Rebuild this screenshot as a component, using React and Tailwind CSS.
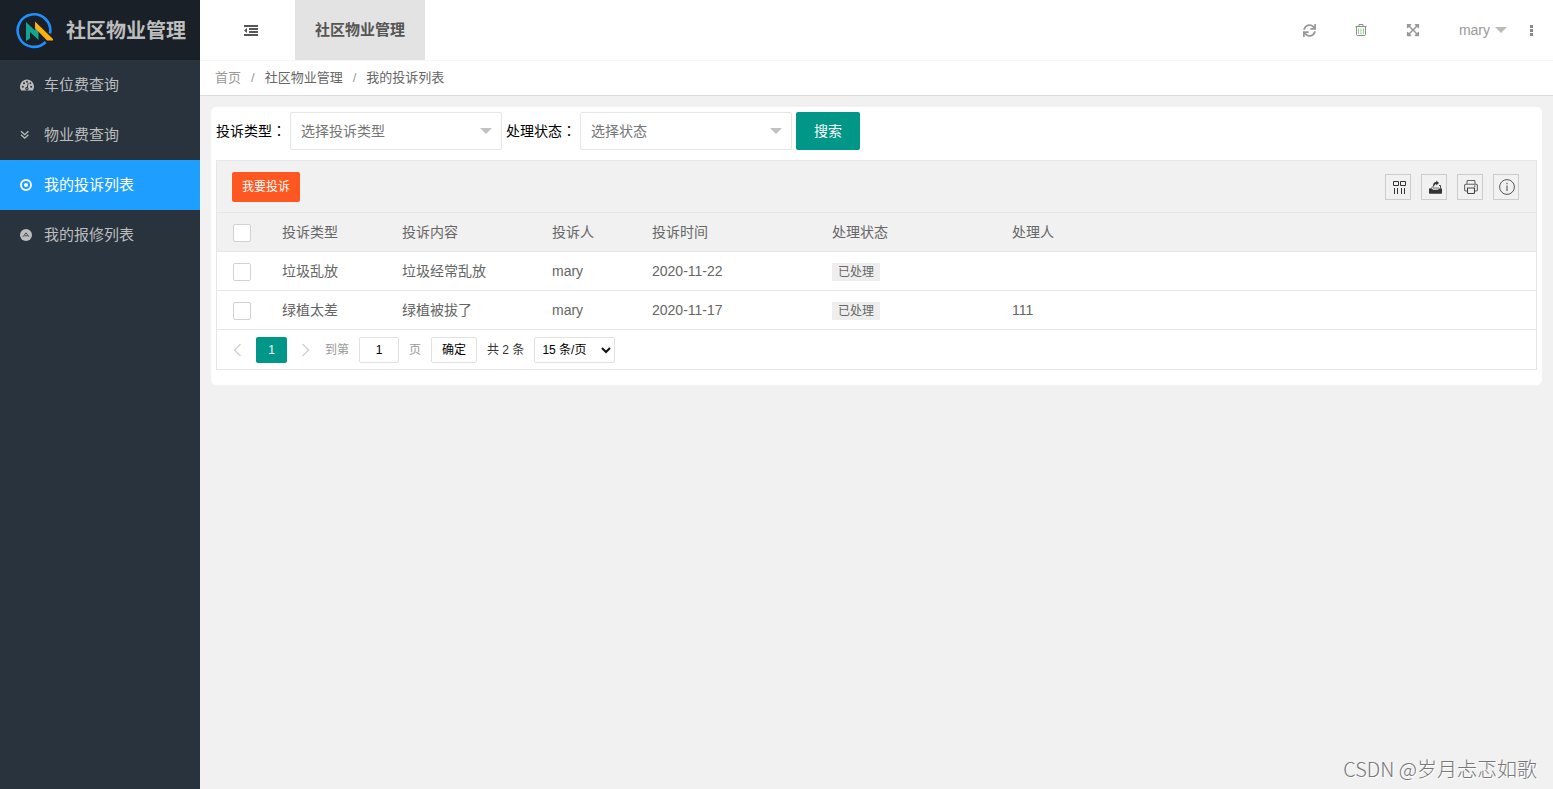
import { FaExpandArrowsAlt, FaSync } from 'react-icons/fa'

const MENU = [
  { label: '车位费查询', icon: GaugeIcon },
  { label: '物业费查询', icon: DoubleDownIcon },
  { label: '我的投诉列表', icon: DotCircleIcon, active: true },
  { label: '我的报修列表', icon: UpCircleIcon },
]

const ROWS = [
  { type: '垃圾乱放', content: '垃圾经常乱放', user: 'mary', date: '2020-11-22', status: '已处理', handler: '' },
  { type: '绿植太差', content: '绿植被拔了', user: 'mary', date: '2020-11-17', status: '已处理', handler: '111' },
]

const COLUMNS = [
  { title: '投诉类型', width: 'w-[120px]' },
  { title: '投诉内容', width: 'w-[150px]' },
  { title: '投诉人', width: 'w-[100px]' },
  { title: '投诉时间', width: 'w-[180px]' },
  { title: '处理状态', width: 'w-[180px]' },
  { title: '处理人', width: '' },
]

const TOOLS = [
  { label: '筛选列', icon: ColumnsIcon },
  { label: '导出', icon: ExportIcon },
  { label: '打印', icon: PrinterIcon },
  { label: '提示', icon: InfoIcon },
]

function Logo() {
  return (
    <svg viewBox="0 0 38 38" className="h-[38px] w-[38px]" fill="none" aria-hidden="true">
      <path d="M35 21.500A16.300 16.300 0 1 0 30.600 30" stroke="#1e90ff" strokeWidth="2.600" />
      <path d="M11 10l9 8.500V15l3.500 3.500V28L15 20v6.500L11 29z" fill="#16a394" />
      <path d="M20 9.500l17.500 17 1 2H32L20 16z" fill="#ffb010" />
    </svg>
  )
}

function GaugeIcon() {
  return (
    <svg viewBox="0 0 14 14" className="h-[14px] w-[14px]" aria-hidden="true">
      <path d="M1.200 12.500A7 7 0 1 1 12.800 12.500z" fill="currentColor" />
      <g fill="#28333e">
        <circle cx="2.800" cy="8.700" r="1" />
        <circle cx="4" cy="5.200" r="1" />
        <circle cx="7" cy="3.700" r="1" />
        <circle cx="11.200" cy="8.700" r="1" />
        <circle cx="10.400" cy="5.200" r="0.900" />
        <path d="M7.800 4.900l.8.300-.7 4.200a1.600 1.600 0 1 1-1-.3z" />
      </g>
      <circle cx="7" cy="10.700" r="0.600" fill="currentColor" />
    </svg>
  )
}

function DoubleDownIcon() {
  return (
    <svg viewBox="0 0 10 10" className="h-[10px] w-[10px]" fill="none" stroke="currentColor" strokeWidth="1.300" aria-hidden="true">
      <path d="M1 1.200l3.700 3.500 3.700-3.500M1 4.700l3.700 3.500 3.700-3.500" />
    </svg>
  )
}

function DotCircleIcon() {
  return (
    <svg viewBox="0 0 12 12" className="h-3 w-3" fill="none" aria-hidden="true">
      <circle cx="6" cy="6" r="5" stroke="currentColor" strokeWidth="1.900" />
      <circle cx="6" cy="6" r="2" fill="currentColor" />
    </svg>
  )
}

function UpCircleIcon() {
  return (
    <svg viewBox="0 0 12 12" className="h-3 w-3" fill="none" aria-hidden="true">
      <circle cx="6" cy="6" r="6" fill="currentColor" />
      <path d="M3 7.800l3-4 3 4M4.500 6.800h3" stroke="#28333e" strokeWidth="0.800" />
    </svg>
  )
}

function FoldIcon() {
  return (
    <svg viewBox="0 0 14 11" className="h-[11px] w-[14px]" fill="currentColor" aria-hidden="true">
      <path d="M0 0h14v2H0zM5 3h9v2H5zM5 6h9v2H5zM0 9h14v2H0zM0 5.500L3 3v5z" />
    </svg>
  )
}

function TrashIcon() {
  return (
    <svg viewBox="0 0 12 13" className="h-[13px] w-3" fill="none" aria-hidden="true">
      <path d="M.5 2.500h11M4 2.500v-2h4v2M1.500 3v7.500q0 1 1 1h7q1 0 1-1V3" stroke="#8c8c8c" />
      <path d="M3.500 4.500V10M6 4.500V10M8.500 4.500V10" stroke="#8fd08f" />
    </svg>
  )
}

function ColumnsIcon() {
  return (
    <svg viewBox="0 0 14 14" className="h-[14px] w-[14px]" fill="none" stroke="#333" aria-hidden="true">
      <path d="M1.500 1.500h5v4h-5zM8.500 1.500h5v4h-5zM2.500 8v6M5.500 8v6M9.500 8v6M12.500 8v6" />
    </svg>
  )
}

function ExportIcon() {
  return (
    <svg viewBox="0 0 14 14" className="h-[14px] w-[14px]" fill="#333" aria-hidden="true">
      <path d="M1 8.500h3l1 1.200h5l1-1.200h3v4.500q0 .8-.8.8H1.800q-.8 0-.8-.8z" />
      <path d="M5 6q0-3.700 3.300-3.900V.6l2.700 2.500-2.700 2.400V3.900Q6.300 4 6.300 6z" />
      <path d="M3 8.500L5.500 6M11 5.500h1.500v3" stroke="#333" strokeWidth="0.900" fill="none" />
      <path d="M5 7h6v2H5z" opacity=".35" />
    </svg>
  )
}

function PrinterIcon() {
  return (
    <svg viewBox="0 0 14 14" className="h-[14px] w-[14px]" fill="none" stroke="#666" strokeWidth="1.100" aria-hidden="true">
      <path d="M3 4V1.500q0-1 1-1h6q1 0 1 1V4M3 11H1.800Q.6 11 .6 9.800V5.400Q.6 4.200 1.800 4.200h10.400q1.200 0 1.200 1.200v4.400q0 1.200-1.200 1.200H11" />
      <path d="M3.500 8h7v4.500q0 1-1 1h-5q-1 0-1-1z" stroke="#444" />
      <path d="M10 6.100h1.500" />
    </svg>
  )
}

function InfoIcon() {
  return (
    <svg viewBox="0 0 16 16" className="h-4 w-4" fill="none" stroke="#555" aria-hidden="true">
      <circle cx="8" cy="8" r="7.400" />
      <path d="M8 6.500V12" stroke="#777" strokeWidth="1.400" />
      <path d="M8 3.800v1.500" stroke="#777" strokeWidth="1.400" />
    </svg>
  )
}

function Chevron({ d }) {
  return (
    <svg viewBox="0 0 8 14" className="h-[14px] w-2" fill="none" stroke="currentColor" strokeWidth="1.500" aria-hidden="true">
      <path d={d} />
    </svg>
  )
}

function FilterSelect({ id, label, placeholder }) {
  return (
    <>
      <label
        htmlFor={id}
        className="mr-1 font-['Liberation_Sans','Noto_Sans_CJK_TC',sans-serif] text-sm text-black"
      >
        {label}
      </label>
      <div className="relative mr-1 w-[212px]">
        <select
          id={id}
          className="block h-[38px] w-full appearance-none rounded-[2px] border border-[#e6e6e6] bg-white px-[10px] text-sm text-[#757575]"
        >
          <option>{placeholder}</option>
        </select>
        <span className="pointer-events-none absolute right-[10px] top-4 border-x-6 border-t-6 border-x-transparent border-t-[#c2c2c2]" />
      </div>
    </>
  )
}

function Checkbox({ label }) {
  return (
    <input
      type="checkbox"
      aria-label={label}
      className="block h-[18px] w-[18px] appearance-none rounded-[2px] border border-[#d2d2d2] bg-white"
    />
  )
}

function Sidebar() {
  return (
    <aside className="w-[200px] shrink-0 bg-[#28333e] text-[#bdbdbd]">
      <div className="flex h-[60px] items-center bg-[#192027] pl-[15px] pt-0.5">
        <Logo />
        <h1 className="ml-[13px] text-xl font-bold">社区物业管理</h1>
      </div>
      <nav>
        {MENU.map(({ label, icon: Icon, active }) => (
          <a
            key={label}
            href="#"
            className={`flex h-[50px] items-center pl-5 text-[15px] ${active ? 'bg-[#1e9fff] text-white' : ''}`}
          >
            <span className="w-6">
              <Icon />
            </span>
            {label}
          </a>
        ))}
      </nav>
    </aside>
  )
}

function Header() {
  return (
    <header className="flex h-[61px] items-start border-b border-[#f6f6f6] bg-white text-[#999]">
      <button type="button" aria-label="收起菜单" className="flex h-[60px] w-[95px] items-center pl-11 text-[#555]">
        <FoldIcon />
      </button>
      <a href="#" className="flex h-[60px] items-center bg-[#e3e3e3] px-5 text-[15px] font-bold text-[#555]">
        社区物业管理
      </a>
      <div className="ml-auto flex h-[60px] items-center pr-5">
        <button type="button" aria-label="刷新" className="mr-[39px]">
          <FaSync className="h-[13px] w-[13px]" />
        </button>
        <button type="button" aria-label="清理" className="mr-[39px]">
          <TrashIcon />
        </button>
        <button type="button" aria-label="全屏" className="mr-[39px]">
          <FaExpandArrowsAlt className="h-[14px] w-[14px]" />
        </button>
        <button type="button" className="mr-[23px] flex items-center gap-[5px] text-sm">
          mary
          <span className="border-x-6 border-t-6 border-x-transparent border-t-[#bbb]" />
        </button>
        <button type="button" aria-label="更多" className="flex flex-col gap-px">
          <span className="h-[3px] w-[3px] bg-[#888]" />
          <span className="h-[3px] w-[3px] bg-[#888]" />
          <span className="h-[3px] w-[3px] bg-[#888]" />
        </button>
      </div>
    </header>
  )
}

function Pagination() {
  return (
    <div className="flex h-[39px] items-center pl-4 text-xs text-[#333]">
      <button type="button" aria-label="上一页" className="mr-[15px] text-[#d2d2d2]">
        <Chevron d="M7.500 1L1.500 7l6 6" />
      </button>
      <button type="button" className="mr-[15px] h-[26px] w-[31px] rounded-[2px] bg-[#009688] text-white">
        1
      </button>
      <button type="button" aria-label="下一页" className="mr-[15px] text-[#d2d2d2]">
        <Chevron d="M.5 1l6 6-6 6" />
      </button>
      <label htmlFor="page" className="mr-[10px] text-[#999]">
        到第
      </label>
      <input
        id="page"
        defaultValue="1"
        className="mr-[10px] h-[26px] w-10 rounded-[2px] border border-[#e2e2e2] bg-white text-center text-black"
      />
      <span className="mr-[10px] text-[#999]">页</span>
      <button type="button" className="mr-[10px] h-[26px] w-[46px] rounded-[2px] border border-[#e2e2e2] bg-white text-black">
        确定
      </button>
      <span className="mr-[10px]">共 2 条</span>
      <div className="relative">
        <select
          aria-label="每页条数"
          className="block h-[26px] w-[81px] appearance-none rounded-[2px] border border-[#e2e2e2] bg-white pl-[7px] text-black"
        >
          <option>15 条/页</option>
        </select>
        <svg
          viewBox="0 0 10 7"
          className="pointer-events-none absolute right-1 top-[10px] h-[7px] w-[10px]"
          fill="none"
          stroke="#111"
          strokeWidth="2"
          aria-hidden="true"
        >
          <path d="M1 1l4 4 4-4" />
        </svg>
      </div>
    </div>
  )
}

function ComplaintTable() {
  return (
    <div className="mt-[10px] border border-[#e6e6e6] text-[#666]">
      <div className="flex h-[51px] items-center justify-between bg-[#f1f1f1] pl-[15px] pr-[17px]">
        <button type="button" className="h-[30px] rounded-[2px] bg-[#ff5722] px-[10px] text-xs text-white">
          我要投诉
        </button>
        <div className="flex gap-[10px]">
          {TOOLS.map(({ label, icon: Icon }) => (
            <button
              key={label}
              type="button"
              aria-label={label}
              className="flex h-[26px] w-[26px] items-center justify-center border border-[#ccc] pl-px pt-px"
            >
              <Icon />
            </button>
          ))}
        </div>
      </div>
      <table className="w-full table-fixed border-collapse text-left text-sm">
        <thead>
          <tr className="h-[39px] border-y border-[#e6e6e6] bg-[#f1f1f1]">
            <th className="w-[50px] pl-4 pt-0.5">
              <Checkbox label="全选" />
            </th>
            {COLUMNS.map((c) => (
              <th key={c.title} className={`px-[15px] font-normal ${c.width}`}>
                {c.title}
              </th>
            ))}
          </tr>
        </thead>
        <tbody>
          {ROWS.map((r) => (
            <tr key={r.date} className="h-[39px] border-b border-[#e6e6e6]">
              <td className="pl-4 pt-0.5">
                <Checkbox label={r.type} />
              </td>
              <td className="px-[15px]">{r.type}</td>
              <td className="px-[15px]">{r.content}</td>
              <td className="px-[15px]">{r.user}</td>
              <td className="px-[15px]">{r.date}</td>
              <td className="px-[15px] pt-0.5">
                <span className="block h-[18px] w-12 bg-[#eee] text-center text-xs leading-[18px]">{r.status}</span>
              </td>
              <td className="px-[15px]">{r.handler}</td>
            </tr>
          ))}
        </tbody>
      </table>
      <Pagination />
    </div>
  )
}

export default function App() {
  return (
    <div className="relative flex min-h-screen bg-[#f1f1f1] font-['Liberation_Sans','Noto_Sans_CJK_SC',sans-serif]">
      <Sidebar />
      <div className="min-w-0 flex-1">
        <Header />
        <nav className="flex h-[35px] items-center gap-[10px] border-b border-[#ddd] bg-white pl-[15px] text-[13px] text-[#666]">
          <a href="#" className="text-[#999]">首页</a>
          <span className="text-[#999]">/</span>
          <a href="#">社区物业管理</a>
          <span className="text-[#999]">/</span>
          <span>我的投诉列表</span>
        </nav>
        <main className="mx-[11px] mt-[11px] rounded-[5px] bg-white px-[5px] pb-[15px] pt-[5px]">
          <form className="flex items-center">
            <FilterSelect id="type" label="投诉类型：" placeholder="选择投诉类型" />
            <FilterSelect id="status" label="处理状态：" placeholder="选择状态" />
            <button type="button" className="h-[38px] w-16 rounded-[2px] bg-[#009688] text-sm text-white">
              搜索
            </button>
          </form>
          <ComplaintTable />
        </main>
      </div>
      <div className="absolute bottom-[6px] right-4 font-['Noto_Sans_CJK_SC',sans-serif] text-xl font-light text-[#777] [text-shadow:1px_1px_0_#fff]">
        CSDN @岁月忐忑如歌
      </div>
    </div>
  )
}
